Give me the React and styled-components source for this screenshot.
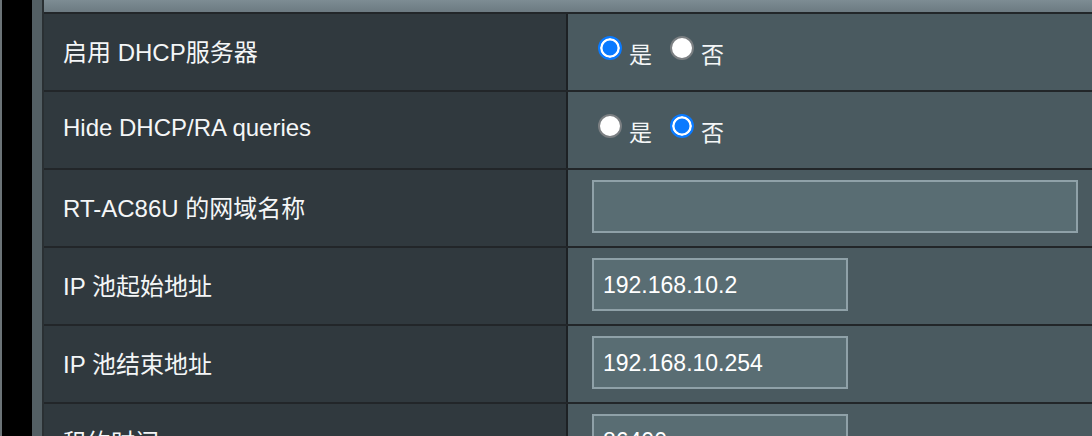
import React, { useState } from "react";
import styled, { createGlobalStyle } from "styled-components";

const GlobalStyle = createGlobalStyle`
  html, body {
    margin: 0;
    padding: 0;
    background: #000;
    overflow: hidden;
  }
  body {
    font-family: "Liberation Sans", Arial, "Noto Sans CJK SC", sans-serif;
  }
`;

const rows = [
  { label: "启用 DHCP服务器", type: "radio", name: "dhcp_enable" },
  { label: "Hide DHCP/RA queries", type: "radio", name: "dhcp_hide" },
  { label: "RT-AC86U 的网域名称", type: "text", value: "", wide: true },
  { label: "IP 池起始地址", type: "text", value: "192.168.10.2" },
  { label: "IP 池结束地址", type: "text", value: "192.168.10.254" },
  { label: "租约时间", type: "text", value: "86400" },
];

const App = () => {
  const [radios, setRadios] = useState({ dhcp_enable: "yes", dhcp_hide: "no" });

  return (
    <>
      <GlobalStyle />
      <Page>
        <EdgeStrip />
        <BlackBar />
        <SideStrip />
        <Panel>
          <HeaderStrip />
          <Table>
            {rows.map((row) => (
              <Row key={row.label}>
                <LabelCell>{row.label}</LabelCell>
                <ValueCell>
                  {row.type === "radio" ? (
                    <RadioGroup>
                      {[
                        ["yes", "是"],
                        ["no", "否"],
                      ].map(([val, text]) => (
                        <RadioLabel
                          key={val}
                          onClick={() => setRadios({ ...radios, [row.name]: val })}
                        >
                          <RadioDot $checked={radios[row.name] === val} />
                          <span>{text}</span>
                        </RadioLabel>
                      ))}
                    </RadioGroup>
                  ) : (
                    <TextInput defaultValue={row.value} $wide={row.wide} />
                  )}
                </ValueCell>
              </Row>
            ))}
          </Table>
        </Panel>
      </Page>
    </>
  );
};

export default App;

const Page = styled.div`
  display: flex;
  width: 1092px;
  height: 436px;
  overflow: hidden;
`;

const EdgeStrip = styled.div`
  width: 2px;
  flex: none;
  background: #6b7377;
`;

const BlackBar = styled.div`
  width: 30px;
  flex: none;
  background: #000;
`;

const SideStrip = styled.div`
  width: 10px;
  flex: none;
  background: #535f64;
  border-right: 2px solid #2a3033;
`;

const Panel = styled.div`
  flex: 1;
  display: flex;
  flex-direction: column;
  min-width: 0;
`;

const HeaderStrip = styled.div`
  height: 12px;
  flex: none;
  background: linear-gradient(#7d8c93, #6c7a81);
  border-bottom: 2px solid #222629;
`;

const Table = styled.div`
  display: flex;
  flex-direction: column;
`;

const Row = styled.div`
  display: grid;
  grid-template-columns: 524px 1fr;
  height: 76px;
  flex: none;
  border-bottom: 2px solid #222629;
`;

const LabelCell = styled.div`
  display: flex;
  align-items: center;
  padding-left: 19px;
  padding-bottom: 4px;
  background: #30393e;
  color: #f4f6f7;
  font-size: 24px;
  white-space: nowrap;
  border-right: 2px solid #1d2124;
`;

const ValueCell = styled.div`
  display: flex;
  align-items: center;
  padding-left: 24px;
  padding-bottom: 3px;
  background: #4a5a60;
`;

const RadioGroup = styled.div`
  display: flex;
  align-items: center;
  gap: 18px;
  padding-left: 6px;
  margin-bottom: 6px;
`;

const RadioLabel = styled.label`
  display: flex;
  align-items: center;
  gap: 7px;
  color: #f4f6f7;
  font-size: 23px;
  cursor: pointer;

  span {
    padding-top: 10px;
  }
`;

const RadioDot = styled.span`
  width: 24px;
  height: 24px;
  box-sizing: border-box;
  border-radius: 50%;
  flex: none;
  ${({ $checked }) =>
    $checked
      ? `
    background: #0a7aff;
    border: 2px solid #0a7aff;
    box-shadow: inset 0 0 0 2.5px #fff;
  `
      : `
    background: #fff;
    border: 2px solid #7b7f82;
  `}
`;

const TextInput = styled.input`
  box-sizing: border-box;
  width: ${({ $wide }) => ($wide ? "486px" : "256px")};
  height: 53px;
  padding: 2px 9px 0;
  background: #596d73;
  border: 2px solid #8fa1a8;
  color: #ffffff;
  font-family: "Liberation Sans", Arial, sans-serif;
  font-size: 23px;
  outline: none;
`;
